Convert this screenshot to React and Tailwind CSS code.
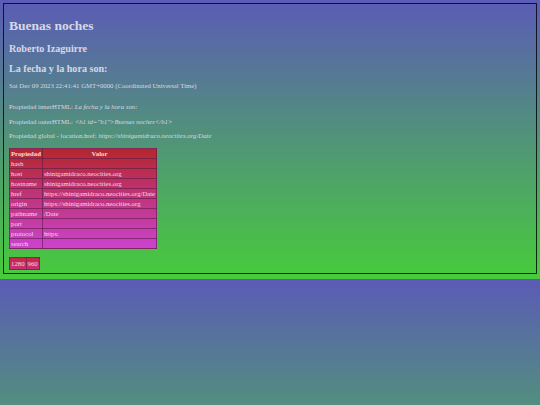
const rows = [
  ["hash", ""],
  ["host", "shinigamidraco.neocities.org"],
  ["hostname", "shinigamidraco.neocities.org"],
  ["href", "https://shinigamidraco.neocities.org/Date"],
  ["origin", "https://shinigamidraco.neocities.org"],
  ["pathname", "/Date"],
  ["port", ""],
  ["protocol", "https:"],
  ["search", ""],
];

export default function App() {
  return (
    <div className="h-[405px] overflow-hidden bg-[linear-gradient(180deg,#5b5bb6,#47cc3b)] bg-[length:100%_279px] font-['Liberation_Serif',serif] text-[#d8d8e8]">
      <div className="m-[3px] border border-black/80 pl-[5px] pt-[13.5px] pb-[3.5px]">
        {/* Headings */}
        <h1 className="text-[13.5px] font-bold leading-[15.5px]">Buenas noches</h1>
        <h2 className="mt-[9.8px] text-[10.1px] font-bold leading-[11.6px]">Roberto Izaguirre</h2>
        <h2 className="mt-[8.7px] text-[10.1px] font-bold leading-[11.6px]">La fecha y la hora son:</h2>

        <p className="mt-[7.5px] text-[6.75px] leading-[7.8px]">
          Sat Dec 09 2023 22:41:41 GMT+0000 (Coordinated Universal Time)
        </p>

        {/* Propiedades */}
        <p className="mt-[13.4px] text-[6.75px] leading-[7.8px]">
          Propiedad innerHTML: <i>La fecha y la hora son:</i>
        </p>
        <p className="mt-[6.5px] text-[6.75px] leading-[7.8px]">
          Propiedad outerHTML: <i>&lt;h1 id="h1"&gt;Buenas noches&lt;/h1&gt;</i>
        </p>
        <p className="mt-[6.5px] text-[6.75px] leading-[7.8px]">
          Propiedad global - location.href: <i>https://shinigamidraco.neocities.org/Date</i>
        </p>

        {/* Location table */}
        <table className="mt-[8px] w-[148px] border-collapse border border-[#6c4c7a] bg-[linear-gradient(180deg,#b4272b,#cb43cf)] text-[6.75px] leading-[9px] text-[#f0dce6]">
          <thead>
            <tr>
              <th className="w-[32px] border border-[#5a1a4a]/60 px-[1px] text-left font-bold">Propiedad</th>
              <th className="border border-[#5a1a4a]/60 px-[1px] text-center font-bold">Valor</th>
            </tr>
          </thead>
          <tbody>
            {rows.map(([name, value]) => (
              <tr key={name}>
                <td className="border border-[#5a1a4a]/60 px-[1px]">{name}</td>
                <td className="border border-[#5a1a4a]/60 px-[1px] whitespace-nowrap">{value}</td>
              </tr>
            ))}
          </tbody>
        </table>

        {/* Window size */}
        <table className="mt-[8px] border-collapse border border-[#8a3a6a] bg-[linear-gradient(180deg,#c42846,#c8307a)] text-[6.75px] leading-[11px] text-[#f0dce6]">
          <tbody>
            <tr>
              <td className="border border-[#6a1a4a]/60 px-[1px]">1280</td>
              <td className="border border-[#6a1a4a]/60 px-[1px]">960</td>
            </tr>
          </tbody>
        </table>
      </div>
    </div>
  );
}
